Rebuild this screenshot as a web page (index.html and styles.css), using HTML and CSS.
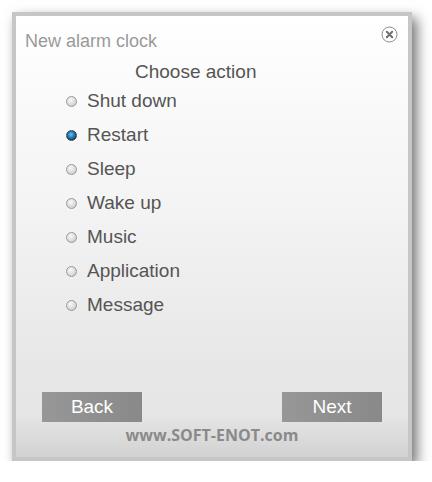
FILE: index.html
```html
<!DOCTYPE html>
<html lang="en">
<head>
    <meta charset="UTF-8">
    <title>New alarm clock</title>
    <link rel="stylesheet" href="styles.css">
</head>
<body>
    <div class="window">
        <div class="titlebar">
            <span class="title">New alarm clock</span>
            <span class="close">
                <svg width="17" height="17" viewBox="0 0 17 17">
                    <circle cx="8.5" cy="8.5" r="7.5" fill="#fff" stroke="#8a8a8a" stroke-width="1"/>
                    <path d="M5.8 5.8 L11.2 11.2 M11.2 5.8 L5.8 11.2" stroke="#6e6e6e" stroke-width="2" stroke-linecap="round"/>
                </svg>
            </span>
        </div>

        <h2 class="heading">Choose action</h2>

        <ul class="actions">
            <li><span class="radio"></span>Shut down</li>
            <li><span class="radio checked"></span>Restart</li>
            <li><span class="radio"></span>Sleep</li>
            <li><span class="radio"></span>Wake up</li>
            <li><span class="radio"></span>Music</li>
            <li><span class="radio"></span>Application</li>
            <li><span class="radio"></span>Message</li>
        </ul>

        <div class="buttons">
            <button type="button">Back</button>
            <button type="button">Next</button>
        </div>

        <div class="site">www.SOFT-ENOT.com</div>
    </div>
</body>
</html>
```

FILE: styles.css
```css
body {
    margin: 0;
    background: #fff;
    font-family: "Liberation Sans", Arial, sans-serif;
}
.window {
    margin: 12px 0 0 12px;
    width: 392px;
    height: 441px;
    border: 4px solid #c6c6c6;
    background: linear-gradient(to bottom, #ffffff 0%, #f3f3f3 45%, #e7e7e7 80%, #e6e6e6 90%, #d2d2d2 100%);
    box-shadow: 5px 6px 12px rgba(0, 0, 0, 0.55);
    display: flex;
    flex-direction: column;
}
.titlebar {
    display: flex;
    justify-content: space-between;
    align-items: flex-start;
    padding: 10px 10px 0 9px;
    height: 32px;
}
.title {
    font-size: 18px;
    color: #9a9a9a;
    margin-top: 5px;
}
.close svg {
    display: block;
}
.heading {
    margin: 3px 0 0 119px;
    font-size: 19px;
    font-weight: normal;
    color: #555;
}
.actions {
    list-style: none;
    margin: 1px 0 0 50px;
    padding: 0;
}
.actions li {
    height: 34px;
    display: flex;
    align-items: center;
    font-size: 19px;
    color: #555;
}
.radio {
    width: 9px;
    height: 9px;
    border-radius: 50%;
    border: 1px solid #9a9a9a;
    background: radial-gradient(circle at 40% 35%, #fafafa 0%, #d8d8d8 60%, #bdbdbd 100%);
    margin-right: 10px;
}
.radio.checked {
    border-color: #3c4a58;
    background: radial-gradient(circle at 45% 40%, #6ec0ee 0%, #1e78b4 45%, #1a3a55 75%, #cfcfcf 80%);
}
.buttons {
    display: flex;
    justify-content: space-between;
    margin: 70px 26px 0 26px;
}
.buttons button {
    width: 100px;
    height: 30px;
    border: none;
    background: linear-gradient(to right, #979797, #898989);
    color: #fff;
    font-family: "Liberation Sans", Arial, sans-serif;
    font-size: 19px;
    padding: 0;
}
.site {
    text-align: center;
    margin-top: 2px;
    font-family: "Open Sans", sans-serif;
    font-weight: bold;
    font-size: 16px;
    color: #8a8a8a;
}
```
